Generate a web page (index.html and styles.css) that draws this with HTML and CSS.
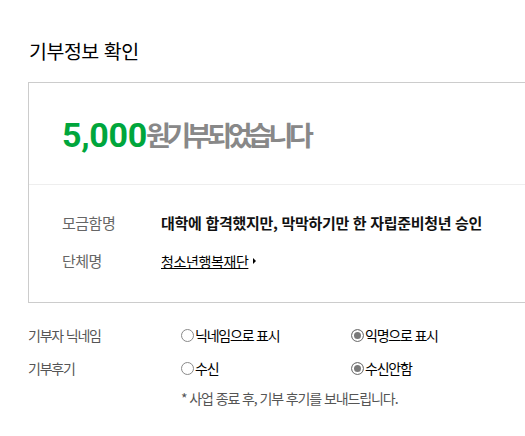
FILE: index.html
```html
<!DOCTYPE html>
<html lang="ko">
<head>
<meta charset="utf-8">
<title>기부정보 확인</title>
<link rel="stylesheet" href="styles.css">
</head>
<body>
<div class="page">
  <h2 class="title">기부정보 확인</h2>
  <div class="box">
    <div class="amount">
      <span class="num">5,000</span><span class="msg">원기부되었습니다</span>
    </div>
    <div class="info">
      <div class="info-row">
        <span class="info-label">모금함명</span>
        <span class="info-value">대학에 합격했지만, 막막하기만 한 자립준비청년 승인</span>
      </div>
      <div class="info-row">
        <span class="info-label">단체명</span>
        <a class="org-link" href="#">청소년행복재단</a><span class="tri"></span>
      </div>
    </div>
  </div>
  <div class="options">
    <div class="opt-row">
      <span class="opt-label">기부자 닉네임</span>
      <span class="opt"><span class="radio"></span>닉네임으로 표시</span>
      <span class="opt"><span class="radio on"></span>익명으로 표시</span>
    </div>
    <div class="opt-row">
      <span class="opt-label">기부후기</span>
      <span class="opt"><span class="radio"></span>수신</span>
      <span class="opt"><span class="radio on"></span>수신안함</span>
    </div>
    <div class="opt-row note-row">
      <span class="opt-label"></span>
      <span class="note">* 사업 종료 후, 기부 후기를 보내드립니다.</span>
    </div>
  </div>
</div>
</body>
</html>
```

FILE: styles.css
```css
html, body {
  margin: 0;
  padding: 0;
  background: #fff;
  overflow: hidden;
}
body {
  font-family: "Noto Sans CJK KR", "Noto Sans", sans-serif;
  color: #000;
}
.page {
  width: 525px;
  height: 436px;
  overflow: hidden;
  padding-left: 28px;
  box-sizing: border-box;
}
.title {
  margin: 0;
  padding-top: 38px;
  font-size: 19.5px;
  line-height: 26px;
  font-weight: 400;
  letter-spacing: -0.5px;
  color: #000;
  padding-left: 1px;
}
.box {
  margin-top: 18px;
  width: 560px;
  border: 1px solid #cccccc;
  box-sizing: border-box;
}
.amount {
  height: 102px;
  display: flex;
  align-items: center;
  padding-left: 33px;
  border-bottom: 1px solid #eeeeee;
  line-height: 40px;
  padding-top: 2px;
  box-sizing: border-box;
}
.num {
  font-family: Roboto, "Noto Sans CJK KR", sans-serif;
  font-weight: 700;
  font-size: 34px;
  color: #00a63c;
  letter-spacing: -0.3px;
}
.msg {
  font-weight: 700;
  font-size: 27px;
  color: #888888;
  letter-spacing: -4.4px;
  margin-left: -1px;
}
.info {
  padding: 28px 0 31px 33px;
  display: flex;
  flex-direction: column;
  gap: 18px;
}
.info-row {
  display: flex;
  align-items: center;
  height: 20px;
  line-height: 20px;
}
.info-label {
  width: 99px;
  font-size: 15px;
  color: #666666;
  letter-spacing: -0.5px;
}
.info-value {
  font-size: 15px;
  font-weight: 700;
  color: #111111;
  letter-spacing: -0.3px;
}
.org-link {
  font-size: 14px;
  color: #000;
  text-decoration: underline;
  letter-spacing: -0.4px;
}
.tri {
  display: inline-block;
  width: 0;
  height: 0;
  margin-left: 5px;
  border-left: 3px solid #000;
  border-top: 3px solid transparent;
  border-bottom: 3px solid transparent;
}
.options {
  margin-top: 22px;
  display: flex;
  flex-direction: column;
  gap: 13px;
}
.opt-row {
  display: flex;
  align-items: center;
  height: 20px;
  line-height: 20px;
  font-size: 14px;
}
.note-row {
  margin-top: -3px;
}
.opt-label {
  width: 153px;
  color: #555555;
  letter-spacing: -1.2px;
}
.opt {
  width: 170px;
  display: flex;
  align-items: center;
  color: #000;
  letter-spacing: -1.2px;
}
.radio {
  width: 13px;
  height: 13px;
  border: 1px solid #8a8a8a;
  border-radius: 50%;
  box-sizing: border-box;
  background: #fff;
  margin-right: 1px;
  flex: none;
}
.radio.on {
  background: #7a7a7a;
  box-shadow: inset 0 0 0 2px #fff;
  border-color: #7a7a7a;
}
.note {
  color: #555555;
  font-size: 14px;
  letter-spacing: -1.1px;
}
```
